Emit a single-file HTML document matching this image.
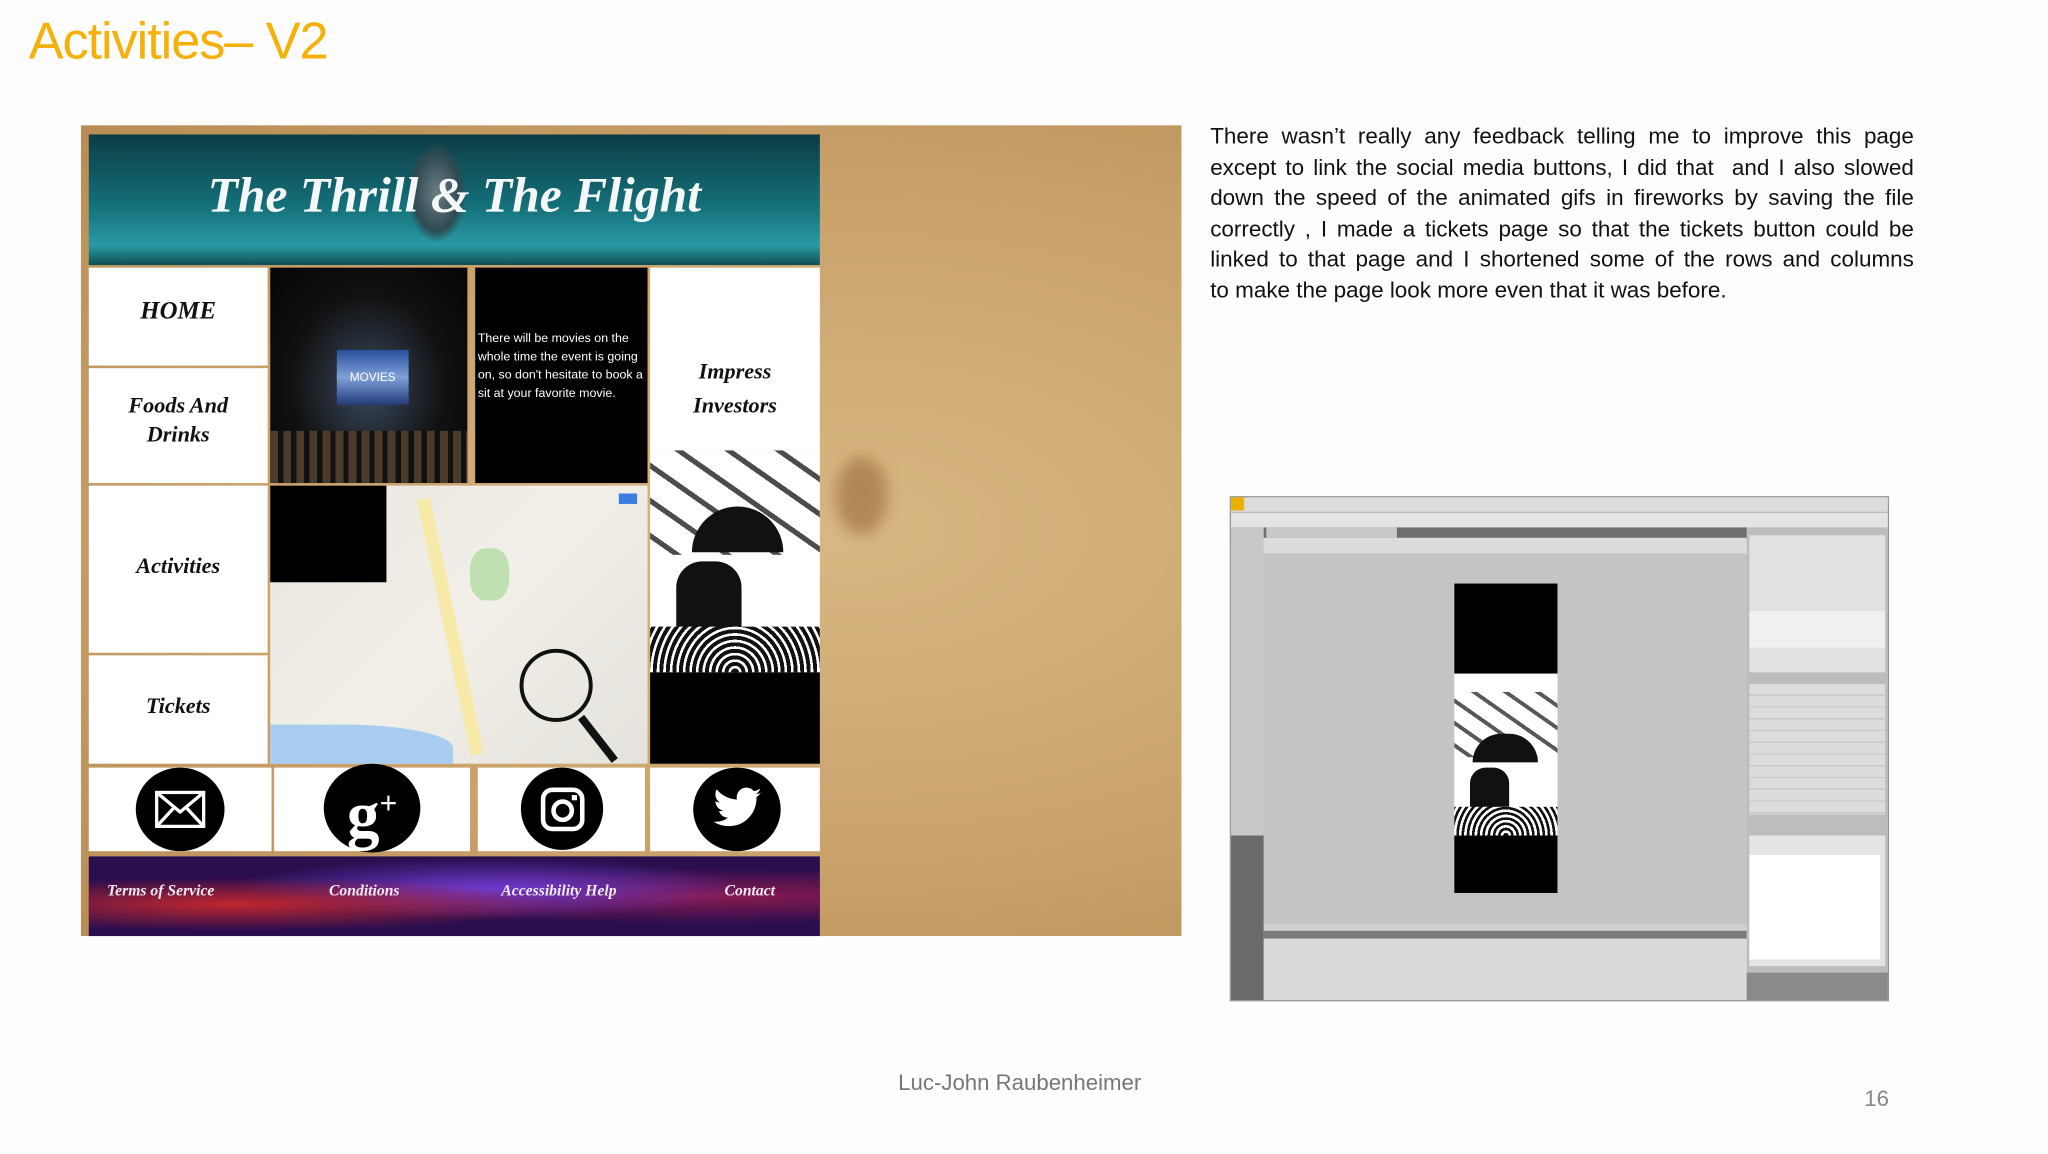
<!DOCTYPE html>
<html><head><meta charset="utf-8"><style>
html,body{margin:0;padding:0;background:#fdfdfd;overflow:hidden;width:2048px;height:1152px}
#s{position:absolute;left:0;top:0;width:1570px;height:884px;transform:scale(1.3055);transform-origin:0 0;font-family:"Liberation Sans",sans-serif}
.a{position:absolute}
.scr{font-family:"Liberation Serif",serif;font-style:italic;font-weight:bold;color:#111;text-align:center}
.cell{position:absolute;background:#fff}
.circ{position:absolute;border-radius:50%;background:#000;color:#fff;text-align:center}
.p div{text-align:justify;text-align-last:justify;white-space:nowrap}
</style></head><body><div id="s">
<div class="a" style="left:22px;top:10px;font-size:40px;color:#f5b10a;letter-spacing:-0.8px">Activities– V2</div>

<div class="a" style="left:62px;top:96px;width:843px;height:621px;background:radial-gradient(ellipse at 70% 50%,#d9b883,#c9a16a 60%,#b88c55);"></div>
<div class="a" style="left:640px;top:350px;width:40px;height:60px;background:#8a5a2a;border-radius:50%;opacity:.5;filter:blur(6px)"></div>
<div class="a" style="left:68px;top:103px;width:560px;height:100px;background:linear-gradient(180deg,#0d3c44,#14707a 55%,#2a9aa5 85%,#0f4e56);"></div>
<div class="a" style="left:312px;top:110px;width:45px;height:75px;background:radial-gradient(ellipse,#6c7d84,#2f4a52 55%,transparent 72%)"></div>
<div class="a scr" style="left:68px;top:128px;width:560px;font-size:38px;color:#f4f8f8">The Thrill &amp; The Flight</div>

<div class="cell" style="left:68px;top:205px;width:137px;height:75px"></div>
<div class="a scr" style="left:68px;top:228px;width:137px;font-size:19px">HOME</div>
<div class="cell" style="left:68px;top:282px;width:137px;height:88px"></div>
<div class="a scr" style="left:68px;top:300px;width:137px;font-size:17px;line-height:22px">Foods And<br>Drinks</div>
<div class="cell" style="left:68px;top:372px;width:137px;height:128px"></div>
<div class="a scr" style="left:68px;top:424px;width:137px;font-size:17px">Activities</div>
<div class="cell" style="left:68px;top:502px;width:137px;height:83px"></div>
<div class="a scr" style="left:68px;top:531px;width:137px;font-size:17px">Tickets</div>

<div class="a" style="left:207px;top:205px;width:151px;height:165px;background:radial-gradient(ellipse at 50% 55%,#3a4a60,#111 55%,#050505)"></div>
<div class="a" style="left:258px;top:268px;width:55px;height:42px;background:linear-gradient(#2a4f9a,#7fa0d8,#243c7a);font-size:9px;color:#fff;text-align:center;line-height:42px">MOVIES</div>
<div class="a" style="left:207px;top:330px;width:151px;height:40px;background:repeating-linear-gradient(90deg,#4a3b2a 0 6px,#111 6px 10px)"></div>
<div class="a" style="left:364px;top:205px;width:132px;height:165px;background:#000"></div>
<div class="a" style="left:366px;top:253px;width:130px;font-size:9.5px;line-height:14px;color:#fff">There will be movies on the whole time the event is going on, so don't hesitate to book a sit at your favorite movie.</div>

<div class="a" style="left:207px;top:372px;width:289px;height:213px;background:linear-gradient(135deg,#e9e6df,#f2efe8 50%,#e4e2dc);"></div>
<div class="a" style="left:340px;top:380px;width:10px;height:200px;background:#f7e9a8;transform:rotate(-12deg)"></div>
<div class="a" style="left:360px;top:420px;width:30px;height:40px;background:#bfe0b0;border-radius:40%"></div>
<div class="a" style="left:207px;top:555px;width:140px;height:30px;background:#a9cdf0;border-radius:0 60% 0 0"></div>
<div class="a" style="left:207px;top:372px;width:89px;height:74px;background:#000"></div>
<div class="a" style="left:398px;top:497px;width:50px;height:50px;border:3px solid #111;border-radius:50%"></div>
<div class="a" style="left:455px;top:545px;width:6px;height:42px;background:#111;transform:rotate(-38deg)"></div>
<div class="a" style="left:474px;top:378px;width:14px;height:8px;background:#3a7de0"></div>

<div class="cell" style="left:498px;top:205px;width:130px;height:140px"></div>
<div class="a scr" style="left:498px;top:272px;width:130px;font-size:17px;line-height:26px">Impress<br>Investors</div>
<div class="a" style="left:498px;top:345px;width:130px;height:170px;background:#fff"></div>
<div class="a" style="left:498px;top:345px;width:130px;height:80px;background:repeating-linear-gradient(35deg,transparent 0 10px,#111 10px 14px,transparent 14px 22px);opacity:.75"></div>
<div class="a" style="left:530px;top:388px;width:70px;height:35px;background:#111;border-radius:35px 35px 0 0"></div>
<div class="a" style="left:518px;top:430px;width:50px;height:60px;background:#111;border-radius:20px 20px 0 0"></div>
<div class="a" style="left:498px;top:480px;width:130px;height:35px;background:repeating-radial-gradient(circle at 50% 100%,#111 0 3px,#fff 3px 5px)"></div>
<div class="a" style="left:498px;top:515px;width:130px;height:70px;background:#000"></div>

<div class="cell" style="left:68px;top:588px;width:140px;height:64px"></div>
<div class="cell" style="left:210px;top:588px;width:150px;height:64px"></div>
<div class="cell" style="left:366px;top:588px;width:128px;height:64px"></div>
<div class="cell" style="left:498px;top:588px;width:130px;height:64px"></div>
<div class="circ" style="left:104px;top:588px;width:68px;height:64px"><svg width="40" height="30" viewBox="0 0 40 30" style="margin-top:17px"><rect x="2" y="2" width="36" height="26" fill="none" stroke="#fff" stroke-width="2.5"/><path d="M2 2L20 17L38 2M2 28L15 14M38 28L25 14" fill="none" stroke="#fff" stroke-width="2.5"/></svg></div>
<div class="circ" style="left:248px;top:585px;width:74px;height:68px;font-family:'Liberation Serif',serif;font-size:50px;line-height:62px;font-weight:bold">g<sup style="font-size:24px">+</sup></div>
<div class="circ" style="left:399px;top:588px;width:63px;height:63px"><svg width="36" height="36" viewBox="0 0 36 36" style="margin-top:14px"><rect x="3" y="3" width="30" height="30" rx="7" fill="none" stroke="#fff" stroke-width="3.5"/><circle cx="18" cy="19" r="7" fill="none" stroke="#fff" stroke-width="3.5"/><rect x="25" y="7" width="4" height="4" fill="#fff"/></svg></div>
<div class="circ" style="left:531px;top:588px;width:67px;height:64px"><svg width="40" height="34" viewBox="0 0 24 20" style="margin-top:15px"><path fill="#fff" d="M23 2.3c-.8.4-1.7.6-2.6.7.9-.6 1.7-1.5 2-2.5-.9.5-1.9.9-2.9 1.1C18.6.6 17.4 0 16.1 0c-2.5 0-4.5 2-4.5 4.5 0 .4 0 .7.1 1C7.9 5.3 4.6 3.5 2.4.8c-.4.7-.6 1.4-.6 2.300 0 1.600.8 2.900 2 3.700-.7 0-1.400-.2-2-.6 0 2.200 1.600 4 3.600 4.400-.4.1-.8.2-1.200.2-.3 0-.6 0-.8-.1.6 1.800 2.200 3.100 4.200 3.100-1.500 1.200-3.500 1.900-5.600 1.900H1c2 1.300 4.400 2 6.900 2 8.300 0 12.800-6.900 12.800-12.800v-.6c.9-.6 1.600-1.400 2.300-2.300z"/></svg></div>

<div class="a" style="left:68px;top:656px;width:560px;height:61px;background:radial-gradient(ellipse at 20% 60%,#c0262e,transparent 40%),radial-gradient(ellipse at 55% 40%,#6a3ad0,transparent 45%),radial-gradient(ellipse at 85% 50%,#8a1a50,transparent 50%),#2a0e4e"></div>
<div class="a scr" style="left:82px;top:675px;font-size:12px;color:#f3e9f5">Terms of Service</div>
<div class="a scr" style="left:252px;top:675px;font-size:12px;color:#f3e9f5">Conditions</div>
<div class="a scr" style="left:384px;top:675px;font-size:12px;color:#f3e9f5">Accessibility Help</div>
<div class="a scr" style="left:555px;top:675px;font-size:12px;color:#f3e9f5">Contact</div>

<div class="a p" style="left:927px;top:93px;width:539px;font-size:17.2px;line-height:23.6px;color:#111">
<div>There wasn’t really any feedback telling me to improve this page</div>
<div>except to link the social media buttons, I did that &nbsp;and I also slowed</div>
<div>down the speed of the animated gifs in fireworks by saving the file</div>
<div>correctly , I made a tickets page so that the tickets button could be</div>
<div>linked to that page and I shortened some of the rows and columns</div>
<div style="text-align-last:left">to make the page look more even that it was before.</div>
</div>

<div class="a" style="left:942px;top:380px;width:505px;height:387px;background:#d4d4d4;border:1px solid #999;box-sizing:border-box"></div>
<div class="a" style="left:943px;top:381px;width:503px;height:11px;background:#dcdcdc;border-bottom:1px solid #bbb"></div>
<div class="a" style="left:943px;top:381px;width:10px;height:10px;background:#e8b000"></div>
<div class="a" style="left:943px;top:393px;width:503px;height:11px;background:#e4e4e4"></div>
<div class="a" style="left:943px;top:404px;width:395px;height:8px;background:#6e6e6e"></div>
<div class="a" style="left:970px;top:404px;width:100px;height:8px;background:#c8c8c8"></div>
<div class="a" style="left:943px;top:404px;width:25px;height:362px;background:#c8c8c8"></div>
<div class="a" style="left:943px;top:640px;width:25px;height:126px;background:#6a6a6a"></div>
<div class="a" style="left:968px;top:412px;width:370px;height:12px;background:#dcdcdc"></div>
<div class="a" style="left:968px;top:424px;width:370px;height:284px;background:#c4c4c4"></div>
<div class="a" style="left:968px;top:708px;width:370px;height:5px;background:#d0d0d0"></div>
<div class="a" style="left:968px;top:713px;width:370px;height:6px;background:#7a7a7a"></div>
<div class="a" style="left:968px;top:719px;width:370px;height:47px;background:#dadada"></div>
<div class="a" style="left:1114px;top:447px;width:79px;height:69px;background:#000"></div>
<div class="a" style="left:1114px;top:516px;width:79px;height:124px;background:#fff"></div>
<div class="a" style="left:1114px;top:530px;width:79px;height:50px;background:repeating-linear-gradient(35deg,transparent 0 6px,#111 6px 9px,transparent 9px 14px);opacity:.7"></div>
<div class="a" style="left:1128px;top:562px;width:50px;height:22px;background:#111;border-radius:25px 25px 0 0"></div>
<div class="a" style="left:1126px;top:588px;width:30px;height:35px;background:#111;border-radius:12px 12px 0 0"></div>
<div class="a" style="left:1114px;top:618px;width:79px;height:22px;background:repeating-radial-gradient(circle at 50% 100%,#111 0 2px,#fff 2px 4px)"></div>
<div class="a" style="left:1114px;top:640px;width:79px;height:44px;background:#000"></div>
<div class="a" style="left:1338px;top:404px;width:108px;height:362px;background:#bdbdbd"></div>
<div class="a" style="left:1340px;top:410px;width:104px;height:105px;background:#e2e2e2"></div>
<div class="a" style="left:1340px;top:468px;width:104px;height:28px;background:#f0f0f0"></div>
<div class="a" style="left:1340px;top:524px;width:104px;height:100px;background:repeating-linear-gradient(#dcdcdc 0 8px,#c8c8c8 8px 9px)"></div>
<div class="a" style="left:1340px;top:640px;width:104px;height:100px;background:#e4e4e4"></div>
<div class="a" style="left:1340px;top:655px;width:100px;height:80px;background:#fff"></div>
<div class="a" style="left:1338px;top:745px;width:108px;height:21px;background:#8a8a8a"></div>

<div class="a" style="left:688px;top:820px;font-size:17px;color:#777">Luc-John Raubenheimer</div>
<div class="a" style="left:1428px;top:832px;font-size:17px;color:#888">16</div>
</div></body></html>
